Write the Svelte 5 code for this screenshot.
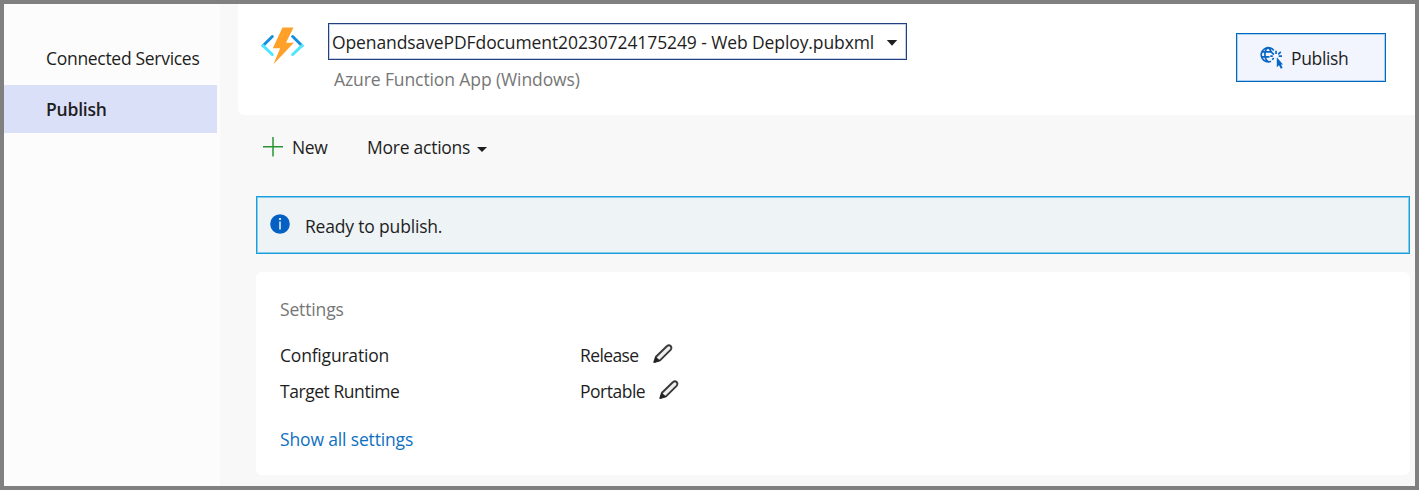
<script>
  const settings = [
    { label: 'Configuration', value: 'Release', labelClass: 'configuration', valueClass: 'release' },
    { label: 'Target Runtime', value: 'Portable', labelClass: 'runtime', valueClass: 'portable' }
  ];
</script>

<div class="window">
  <nav>
    <div class="item"><span class="t connected">Connected Services</span></div>
    <div class="item active"><span class="t current">Publish</span></div>
  </nav>
  <main>
    <header>
      <svg class="logo" width="44" height="40" viewBox="0 0 44 40">
        <g fill="none" stroke-width="3" stroke-linecap="round">
          <path d="M12.3 9.5 3 18.7" stroke="#1490df" />
          <path d="M3 18.7 12.3 27.5" stroke="#50e6ff" />
          <path d="M32.7 9.5 42 18.7" stroke="#1490df" />
          <path d="M42 18.7 32.7 27.5" stroke="#50e6ff" />
        </g>
        <path d="M22.5 0.5H33.5L26 15.7H33.8L13.5 37.3 20.2 21.2H12.8Z" fill="#ffa028" />
      </svg>
      <div class="profile">
        <div class="select">
          <span class="t file">OpenandsavePDFdocument20230724175249 - Web Deploy.pubxml</span>
          <svg width="12" height="6" viewBox="0 0 12 6"><path d="M0.8 0h10.4L6 5.7z" fill="#1e1e1e" /></svg>
        </div>
        <div class="sub"><span class="t azure">Azure Function App (Windows)</span></div>
      </div>
      <button>
        <svg width="24" height="24" viewBox="0 0 24 24" fill="none" stroke="#0a66c4" stroke-width="1.7">
          <path d="M13.8 4.5A7 7 0 1 0 11 15.2" />
          <path d="M8 1.3C3.9 4.3 3.9 12.7 8 15.4M8 1.3C10 2.8 11 4.7 11.1 6.6M1.6 5.8H12M1.6 10.8H9.5" />
          <path d="M16 4.8V8M11.4 6.2l2.5 2.5M20.8 5.8l-2.6 2.6M18.7 10.2H22M12.8 10.2H10.3M13.8 12l-1.6 1.8" />
          <path d="M16.8 11.2V21.2L19 19.3 20.8 22.7 22.6 21.8 21 18.5H23Z" fill="#0a66c4" stroke="none" />
        </svg>
        <span class="t publish">Publish</span>
      </button>
    </header>
    <div class="toolbar">
      <svg width="20" height="20" viewBox="0 0 20 20"><path d="M10 0v19.5M0 9.7h20" stroke="#299434" stroke-width="1.5" /></svg>
      <span class="t new">New</span>
      <span class="t more">More actions</span>
      <svg class="caret" width="10" height="5" viewBox="0 0 10 5"><path d="M0 0h10L5 5z" fill="#1e1e1e" /></svg>
    </div>
    <div class="banner">
      <svg width="20" height="20" viewBox="0 0 20 20">
        <circle cx="10" cy="10" r="9.8" fill="#0560c4" />
        <path d="M10 7.5v8" stroke="#fff" stroke-width="1.4" /><circle cx="10" cy="5" r="1.1" fill="#fff" />
      </svg>
      <span class="t ready">Ready to publish.</span>
    </div>
    <section>
      <h2><span class="t settings">Settings</span></h2>
      {#each settings as s}
        <div class="row">
          <div class="label"><span class="t {s.labelClass}">{s.label}</span></div>
          <span class="t {s.valueClass}">{s.value}</span>
          <svg width="20" height="20" viewBox="0 0 20 20">
            <path d="M3 12.8 13.8 2.2Q16 .5 17.6 2 19.2 3.8 17.6 5.9L7 16.4 1.3 18Z" fill="#eee" stroke="#383838" stroke-width="1.9" stroke-linejoin="round" />
            <path d="M2.5 12.6 7.3 16.8 .6 18.7Z" fill="#222" />
          </svg>
        </div>
      {/each}
      <a href="#settings"><span class="t show">Show all settings</span></a>
    </section>
  </main>
</div>

<style>
  :global(body) { margin: 0; }
  * { box-sizing: border-box; }
  .window {
    width: 1419px; height: 490px; border: 4px solid #808080; background: #f8f8f8;
    display: flex; overflow: hidden; color: #1e1e1e;
    font: 17.5px/24px "Open Sans", "Noto Sans", sans-serif;
  }
  .t { white-space: nowrap; }
  .connected { letter-spacing: -0.3px; }
  .current { letter-spacing: -0.2px; }
  .file { letter-spacing: -0.1px; }
  .azure { letter-spacing: -0.1px; }
  .publish { letter-spacing: -0.35px; }
  .new { letter-spacing: -0.4px; }
  .more { letter-spacing: -0.25px; }
  .ready { letter-spacing: -0.18px; }
  .settings, .show { letter-spacing: -0.15px; }
  .configuration { letter-spacing: -0.2px; }
  .runtime { letter-spacing: -0.45px; }
  .release { letter-spacing: -0.6px; }
  .portable { letter-spacing: -0.5px; }
  svg { flex: none; display: block; }
  nav { width: 216px; background: #fcfcfc; padding-top: 30px; flex: none; }
  .item { width: 213px; height: 48px; padding: 12px 0 0 42px; margin-bottom: 3px; }
  .active { background: #dbe0f9; font-weight: 600; }
  main { width: 1177px; margin-left: 18px; flex: none; }
  header { height: 111px; background: #fff; border-bottom-left-radius: 6px; display: flex; padding: 0 29px 0 22px; }
  .logo { margin-top: 23px; }
  .profile { margin: 19px 0 0 24px; }
  .select {
    width: 579px; height: 37px; border: 1px solid #23407f; box-shadow: inset 0 0 0 1px #c5cfe6;
    display: flex; align-items: center; justify-content: space-between; padding: 0 8px 0 3px;
  }
  .select svg { margin-top: 3px; }
  .sub { color: #767676; padding: 7px 0 0 6px; }
  button {
    width: 150px; height: 49px; margin: 29px 0 0 auto; padding: 0 0 0 23px; border: 1px solid #0067c0;
    box-shadow: inset 0 0 0 1px #abd0ef; background: #f2f5fd; display: flex; align-items: flex-start;
    font: inherit; color: inherit; text-align: left;
  }
  button svg { margin-top: 12px; }
  button .t { margin: 12px 0 0 7px; }
  .toolbar { height: 81px; padding: 20px 0 0 25px; display: flex; }
  .toolbar svg { margin-top: 2px; }
  .toolbar .new { margin-left: 9px; width: 75px; }
  .toolbar .more { width: 110px; }
  .toolbar .caret { margin-top: 12px; }
  .banner {
    width: 1154px; height: 58px; margin-left: 18px; padding: 17px 0 0 13px; border: 1px solid #189fdc;
    box-shadow: inset 0 0 0 1px #85c9ec; background: #eef3f6; display: flex;
  }
  .banner .t { margin: 0 0 0 15px; }
  section { width: 1154px; height: 203px; margin: 18px 0 0 18px; padding: 25px 24px 0; border-radius: 6px; background: #fff; }
  h2 { font: inherit; color: #767676; margin: 0 0 22px; height: 24px; }
  .row { display: flex; height: 36px; }
  .label { width: 300px; }
  .row svg { margin: 1px 0 0 14px; }
  a { display: block; margin-top: 12px; color: #0e70c0; text-decoration: none; }
</style>
